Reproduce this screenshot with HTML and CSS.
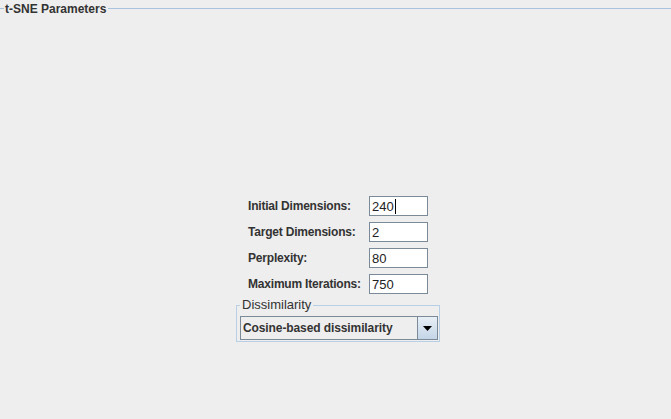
FILE: index.html
```html
<!DOCTYPE html>
<html>
<head>
<meta charset="utf-8">
<title>t-SNE Parameters</title>
<link rel="stylesheet" href="styles.css">
</head>
<body>
<div class="panel">
  <div class="title-row"><span class="title">t-SNE Parameters</span></div>
  <div class="content">
    <div class="column">
      <div class="form">
        <label class="label">Initial Dimensions:</label>
        <div class="field">240<span class="caret"></span></div>
        <label class="label">Target Dimensions:</label>
        <div class="field">2</div>
        <label class="label">Perplexity:</label>
        <div class="field">80</div>
        <label class="label">Maximum Iterations:</label>
        <div class="field">750</div>
      </div>
      <fieldset class="group">
        <legend class="group-title">Dissimilarity</legend>
        <div class="combo">
          <div class="combo-value">Cosine-based dissimilarity</div>
          <div class="combo-button">
            <svg width="9" height="5" viewBox="0 0 9 5"><polygon points="0,0 9,0 4.5,5" fill="#000"/></svg>
          </div>
        </div>
      </fieldset>
    </div>
  </div>
</div>
</body>
</html>
```

FILE: styles.css
```css
html, body {
  margin: 0;
  padding: 0;
  background: #eeeeee;
}
body {
  width: 671px;
  height: 419px;
  overflow: hidden;
  font-family: "Liberation Sans", Arial, sans-serif;
  font-size: 12px;
  color: #333333;
}
.panel {
  display: flex;
  flex-direction: column;
  height: 419px;
}
.title-row {
  display: flex;
  align-items: center;
  height: 17px;
}
.title-row::before {
  content: "";
  width: 4px;
  height: 1px;
  background: #a9c3de;
}
.title-row::after {
  content: "";
  flex: 1;
  height: 1px;
  background: #a9c3de;
}
.title {
  font-weight: bold;
  padding: 0 2px 0 1px;
  line-height: 14px;
}
.content {
  display: flex;
  justify-content: center;
  padding-top: 179px;
  padding-left: 5px;
}
.column {
  width: 204px;
  display: flex;
  flex-direction: column;
}
.form {
  display: grid;
  grid-template-columns: 121px 59px;
  grid-auto-rows: 20px;
  row-gap: 6px;
  justify-content: center;
}
.label {
  font-weight: bold;
  letter-spacing: -0.2px;
  display: flex;
  align-items: center;
  white-space: nowrap;
}
.field {
  box-sizing: border-box;
  height: 20px;
  border: 1px solid #7a8a99;
  background: #ffffff;
  padding: 0 1px 0 2px;
  display: flex;
  align-items: center;
  font-size: 13px;
  color: #222222;
}
.caret {
  width: 1px;
  height: 15px;
  background: #000;
  margin-left: 1px;
}
.group {
  margin: 4px 0 0 0;
  border: 1px solid #b8cfe5;
  padding: 4px 1px 1px 3px;
  min-width: 0;
}
.group-title {
  padding: 0 2px;
  line-height: 14px;
  font-size: 13px;
}
.combo {
  box-sizing: border-box;
  height: 24px;
  border: 1px solid #7a8a99;
  display: flex;
}
.combo-value {
  flex: 1;
  font-weight: bold;
  letter-spacing: -0.1px;
  padding-left: 2px;
  display: flex;
  align-items: center;
  background: #eeeeee;
}
.combo-button {
  box-sizing: border-box;
  width: 20px;
  border-left: 1px solid #7a8a99;
  background: linear-gradient(#e8eff6, #c4d5e7);
  display: flex;
  align-items: center;
  justify-content: center;
}
.combo-button svg {
  display: block;
}
```
